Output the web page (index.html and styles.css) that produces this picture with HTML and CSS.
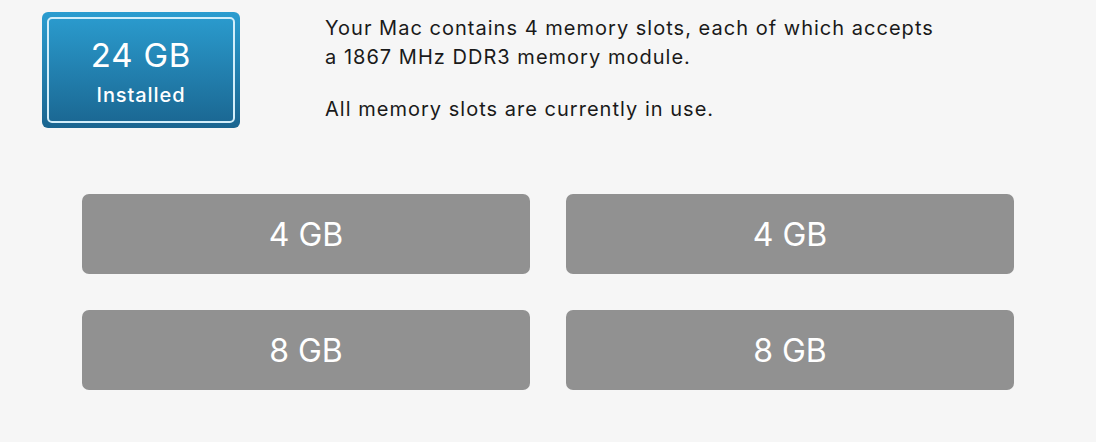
FILE: index.html
```html
<!DOCTYPE html>
<html>
<head>
<meta charset="utf-8">
<link rel="stylesheet" href="styles.css">
</head>
<body>
<div class="page">
  <div class="top">
    <div class="installed">
      <div class="installed-inner">
        <div class="amount">24 GB</div>
        <div class="label">Installed</div>
      </div>
    </div>
    <div class="info">
      <p>Your Mac contains 4 memory slots, each of which accepts<br>a 1867 MHz DDR3 memory module.</p>
      <p>All memory slots are currently in use.</p>
    </div>
  </div>
  <div class="slots">
    <div class="slot">4 GB</div>
    <div class="slot">4 GB</div>
    <div class="slot">8 GB</div>
    <div class="slot">8 GB</div>
  </div>
</div>
</body>
</html>
```
FILE: styles.css
```css
html, body {
  margin: 0;
  padding: 0;
  background: #f6f6f6;
}
body {
  font-family: Inter, "Liberation Sans", sans-serif;
  width: 1096px;
  height: 442px;
  overflow: hidden;
}
.page {
  padding: 12px 0 0 42px;
}
.top {
  display: flex;
  align-items: flex-start;
  height: 116px;
}
.installed {
  width: 198px;
  height: 116px;
  box-sizing: border-box;
  border-radius: 6px;
  background: linear-gradient(#2b9dd0, #1a6590);
  padding: 5px;
}
.installed-inner {
  height: 100%;
  box-sizing: border-box;
  border: 2px solid #d2eefa;
  border-radius: 5px;
  display: flex;
  flex-direction: column;
  align-items: center;
  color: #fff;
}
.amount {
  font-size: 33px;
  line-height: 40px;
  margin-top: 16px;
  letter-spacing: 0.8px;
}
.label {
  font-size: 20px;
  line-height: 24px;
  margin-top: 8px;
  letter-spacing: 0.9px;
  font-weight: 500;
}
.info {
  margin-left: 85px;
  margin-top: 2px;
  color: #1a1a1a;
  font-size: 20px;
  line-height: 29px;
  letter-spacing: 1.02px;
}
.info p {
  margin: 0 0 23px 0;
}
.info p:last-child {
  margin-bottom: 0;
}
.slots {
  display: grid;
  grid-template-columns: 448px 448px;
  grid-auto-rows: 80px;
  gap: 36px;
  margin: 66px 0 0 40px;
}
.slot {
  background: #919191;
  border-radius: 7px;
  color: #fff;
  font-size: 32px;
  display: flex;
  align-items: center;
  justify-content: center;
}
```
